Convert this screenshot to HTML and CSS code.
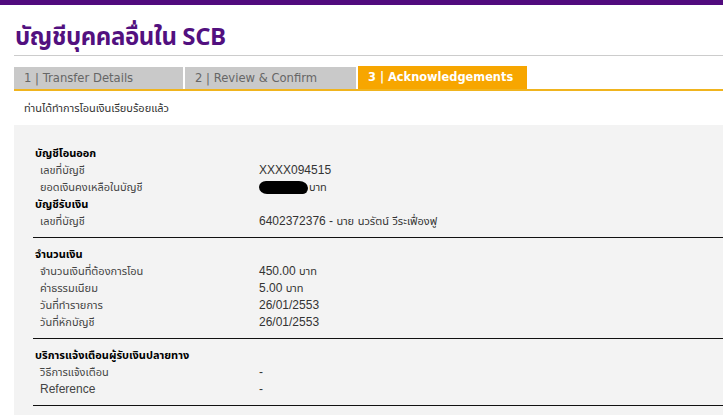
FILE: index.html
```html
<!DOCTYPE html>
<html lang="th">
<head>
<meta charset="utf-8">
<title>บัญชีบุคคลอื่นใน SCB</title>
<link rel="stylesheet" href="styles.css">
</head>
<body>
<div class="topbar"></div>
<div class="page">
  <h1 class="title">บัญชีบุคคลอื่นใน SCB</h1>
  <div class="tabs">
    <div class="tab">1 | Transfer Details</div>
    <div class="tab">2 | Review &amp; Confirm</div>
    <div class="tab active">3 | Acknowledgements</div>
  </div>
  <p class="notice">ท่านได้ทำการโอนเงินเรียบร้อยแล้ว</p>
  <div class="panel">
    <div class="section">
      <div class="head">บัญชีโอนออก</div>
      <div class="row"><span class="label">เลขที่บัญชี</span><span class="value">XXXX094515</span></div>
      <div class="row"><span class="label">ยอดเงินคงเหลือในบัญชี</span><span class="value"><span class="redact"></span><span class="th">บาท</span></span></div>
      <div class="head">บัญชีรับเงิน</div>
      <div class="row"><span class="label">เลขที่บัญชี</span><span class="value">6402372376 - <span class="th">นาย นวรัตน์ วีระเฟื่องฟู</span></span></div>
    </div>
    <div class="section">
      <div class="head">จำนวนเงิน</div>
      <div class="row"><span class="label">จำนวนเงินที่ต้องการโอน</span><span class="value">450.00 <span class="th">บาท</span></span></div>
      <div class="row"><span class="label">ค่าธรรมเนียม</span><span class="value">5.00 <span class="th">บาท</span></span></div>
      <div class="row"><span class="label">วันที่ทำรายการ</span><span class="value">26/01/2553</span></div>
      <div class="row"><span class="label">วันที่หักบัญชี</span><span class="value">26/01/2553</span></div>
    </div>
    <div class="section">
      <div class="head">บริการแจ้งเตือนผู้รับเงินปลายทาง</div>
      <div class="row"><span class="label">วิธีการแจ้งเตือน</span><span class="value">-</span></div>
      <div class="row"><span class="label latin">Reference</span><span class="value">-</span></div>
    </div>
  </div>
</div>
</body>
</html>
```

FILE: styles.css
```css
html, body {
  margin: 0;
  padding: 0;
  background: #fff;
  font-family: "DejaVu Sans", "Noto Sans Thai", "Noto Sans", sans-serif;
  overflow: hidden;
}
.topbar {
  height: 5px;
  background: #510b7e;
}
.page {
  padding-left: 14px;
}
.title {
  margin: 0;
  padding: 16px 0 0 1px;
  height: 34px;
  font-size: 24px;
  line-height: 34px;
  font-weight: bold;
  color: #52107f;
  font-family: "Noto Sans Thai", "DejaVu Sans", sans-serif;
  letter-spacing: -0.4px;
  border-bottom: 1px solid #cccccc;
}
.tabs {
  display: flex;
  gap: 2px;
  margin-top: 10px;
  border-bottom: 2px solid #f0b41e;
  height: 23px;
}
.tab {
  width: 159px;
  padding-left: 10px;
  background: #c9c9c9;
  color: #666;
  font-size: 11.6px;
  line-height: 22px;
  height: 22px;
  margin-top: 1px;
  white-space: nowrap;
}
.tab:nth-child(2) { width: 161px; }
.tab.active {
  background: #f7a600;
  color: #fff;
  font-weight: bold;
  font-size: 11.4px;
  margin-top: 0;
  height: 23px;
  line-height: 23px;
}
.notice {
  margin: 0;
  padding: 10px 0 0 10px;
  height: 24px;
  font-size: 11px;
  line-height: 16px;
  color: #333;
}
.panel {
  background: #f3f3f3;
  padding: 20px 0 2px 19px;
}
.section {
  border-bottom: 1px solid #111;
  padding: 0 0 7px 0;
  margin-bottom: 8px;
}
.head {
  font-weight: bold;
  font-size: 11px;
  line-height: 17px;
  height: 17px;
  color: #000;
  padding-left: 2px;
}
.row {
  display: flex;
  font-size: 11px;
  line-height: 17px;
  height: 17px;
  color: #444;
}
.label {
  width: 219px;
  padding-left: 7px;
  flex: none;
}
.value {
  font-family: "Liberation Sans", Arial, sans-serif;
  font-size: 12px;
  color: #333;
  display: flex;
  align-items: center;
  white-space: pre;
}
.th {
  font-family: "DejaVu Sans", "Noto Sans Thai", sans-serif;
  font-size: 11px;
}
.latin {
  font-family: "Liberation Sans", Arial, sans-serif;
  font-size: 12px;
}
.redact {
  display: inline-block;
  width: 49px;
  height: 13px;
  background: #000;
  border-radius: 7px 9px 5px 8px / 6px 7px 6px 7px;
  margin-right: 1px;
}
```
